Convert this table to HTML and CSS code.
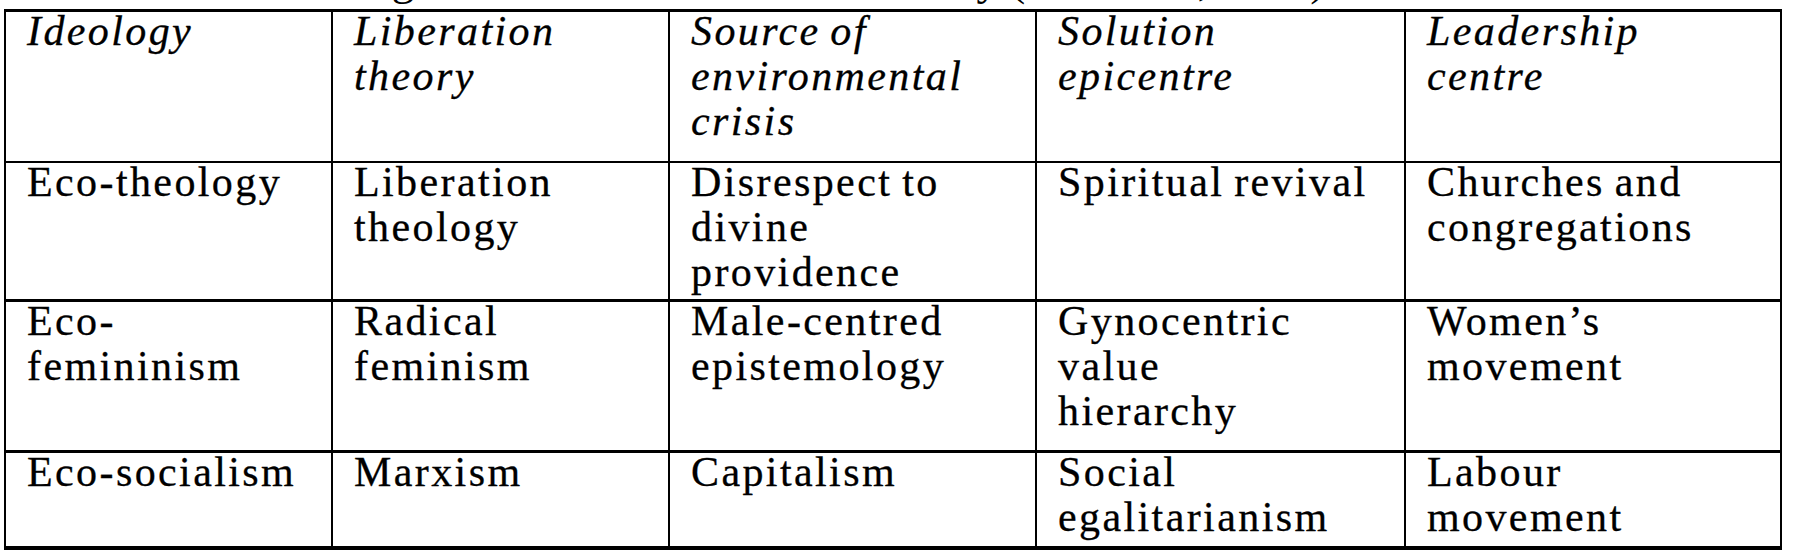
FILE: index.html
```html
<!DOCTYPE html>
<html lang="en">
<head>
<meta charset="utf-8">
<title>Ideologies table</title>
<link rel="stylesheet" href="styles.css">
</head>
<body>
<div class="caption"><span class="caption-text">Table 1: Ecological liberation and radical theory (Merchant, 1992)</span></div>
<table class="ideo">
  <colgroup>
    <col class="c1"><col class="c2"><col class="c3"><col class="c4"><col class="c5">
  </colgroup>
  <thead>
    <tr class="r-head">
      <th><div class="cell">Ideology</div></th>
      <th><div class="cell">Liberation<br>theory</div></th>
      <th><div class="cell">Source of<br>environmental<br>crisis</div></th>
      <th><div class="cell">Solution<br>epicentre</div></th>
      <th><div class="cell">Leadership<br>centre</div></th>
    </tr>
  </thead>
  <tbody>
    <tr class="r1">
      <td><div class="cell">Eco-theology</div></td>
      <td><div class="cell">Liberation<br>theology</div></td>
      <td><div class="cell">Disrespect to<br>divine<br>providence</div></td>
      <td><div class="cell">Spiritual revival</div></td>
      <td><div class="cell">Churches and<br>congregations</div></td>
    </tr>
    <tr class="r2">
      <td><div class="cell">Eco-<br>femininism</div></td>
      <td><div class="cell">Radical<br>feminism</div></td>
      <td><div class="cell">Male-centred<br>epistemology</div></td>
      <td><div class="cell">Gynocentric<br>value<br>hierarchy</div></td>
      <td><div class="cell">Women’s<br>movement</div></td>
    </tr>
    <tr class="r3">
      <td><div class="cell">Eco-socialism</div></td>
      <td><div class="cell">Marxism</div></td>
      <td><div class="cell">Capitalism</div></td>
      <td><div class="cell">Social<br>egalitarianism</div></td>
      <td><div class="cell">Labour<br>movement</div></td>
    </tr>
  </tbody>
</table>
</body>
</html>
```

FILE: styles.css
```css
html, body {
  margin: 0;
  padding: 0;
  background: #ffffff;
}

body {
  font-family: "Liberation Serif", "Times New Roman", serif;
  color: #000000;
}

.caption {
  height: 9px;
  overflow: hidden;
  display: flex;
  align-items: flex-end;
  padding-left: 130px;
  white-space: nowrap;
  font-size: 45px;
}

.caption-text {
  line-height: 58px;
}

.ideo {
  border-collapse: collapse;
  table-layout: fixed;
  width: 1776px;
  margin-left: 4px;
  border-top: 3px solid #000;
  border-bottom: 4px solid #000;
  border-left: 2px solid #000;
  border-right: 2px solid #000;
  font-size: 42px;
  letter-spacing: 2.4px;
  word-spacing: -3px;
  -webkit-text-stroke: 0.3px #000;
}

.c1 { width: 327px; }
.c2 { width: 337px; }
.c3 { width: 367px; }
.c4 { width: 369px; }
.c5 { width: 376px; }

.ideo th,
.ideo td {
  border-left: 2px solid #000;
  border-right: 2px solid #000;
  vertical-align: top;
  text-align: left;
  padding: 0 4px 0 21px;
  line-height: 45px;
  font-weight: normal;
}

.ideo th {
  font-style: italic;
  border-bottom: 2px solid #000;
}

.ideo tbody tr + tr td {
  border-top: 3px solid #000;
}

.cell {
  margin-top: -3px;
  white-space: nowrap;
}

.r-head { height: 151px; }
.r1 { height: 139px; }
.r2 { height: 151px; }
.r3 { height: 96px; }
```
